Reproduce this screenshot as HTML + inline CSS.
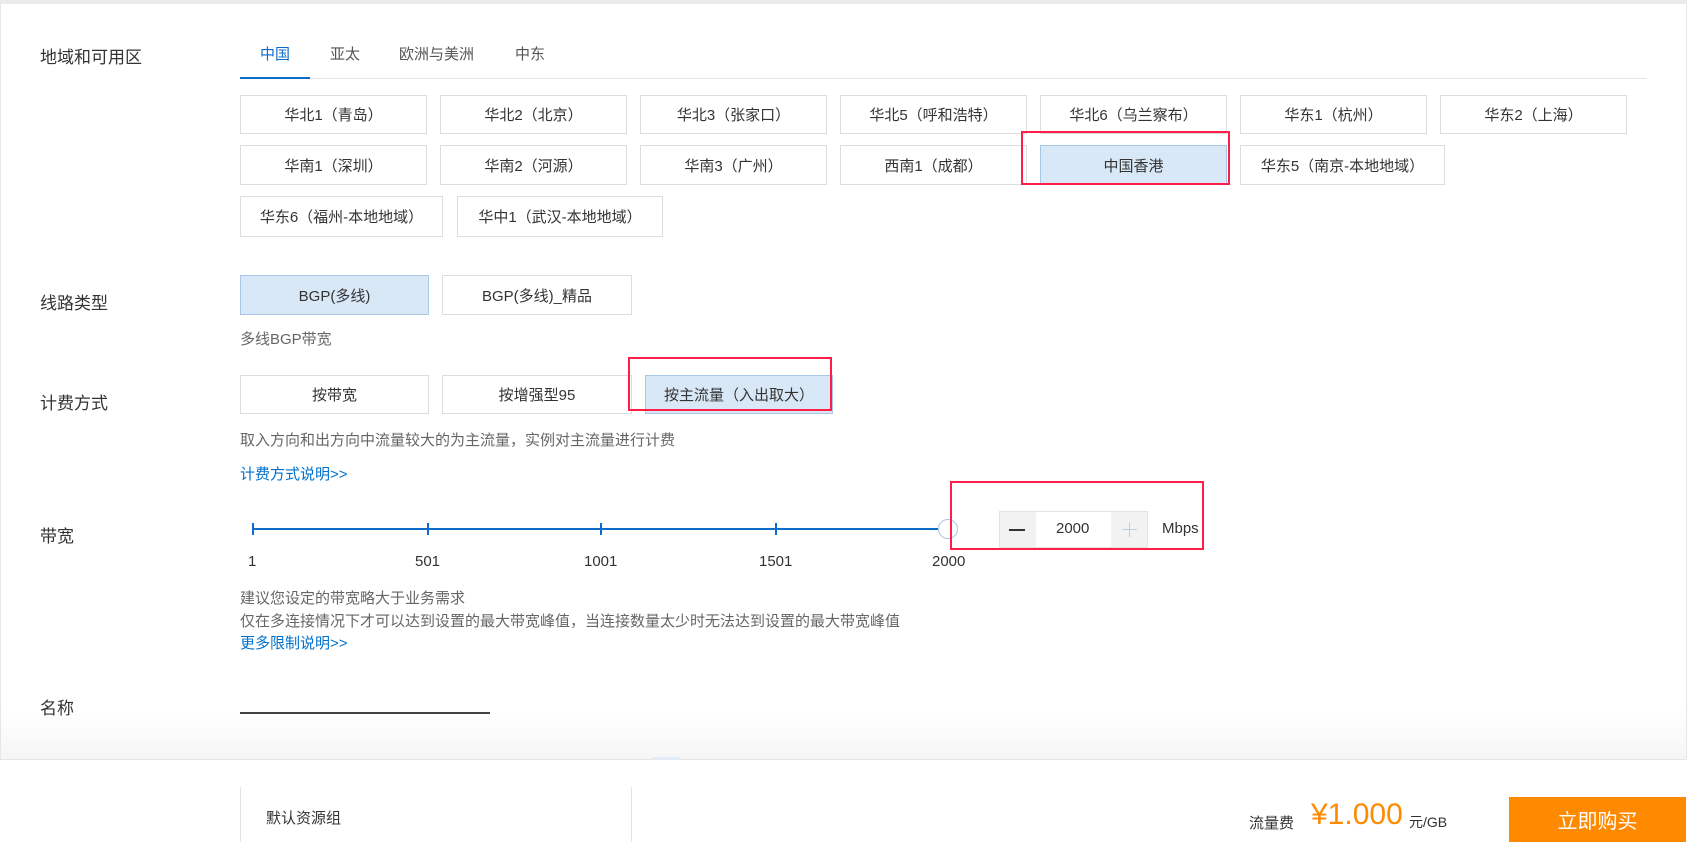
<!DOCTYPE html>
<html><head><meta charset="utf-8"><style>
*{margin:0;padding:0;box-sizing:border-box}
body{width:1690px;height:842px;position:relative;background:#fff;font-family:"Liberation Sans","Noto Sans CJK SC",sans-serif;color:#333;overflow:hidden}
.card{position:absolute;left:0;top:0;width:1687px;height:760px;border:1px solid #e6e6e6;border-top:4px solid #ebebeb;background:linear-gradient(#fff 705px,#f5f5f5 758px)}
.a{position:absolute;white-space:nowrap}
.lbl{font-size:17px;color:#333;left:40px}
.tab{font-size:15px;color:#555;top:43px}
.b{position:absolute;border:1px solid #ddd;background:#fff;font-size:15px;color:#333;display:flex;align-items:center;justify-content:center}
.sel{background:#d8e8f7;border-color:#a9c7e6}
.red{position:absolute;border:2px solid #ff1e4a}
.g{font-size:15px;color:#666}
.lk{font-size:15px;color:#0070cc}
.tick{position:absolute;width:2px;height:12px;background:#0f6bc8;top:523px}
.tl{font-size:15px;color:#333;top:553px}
</style></head><body>
<div class="card"></div>
<div class="a lbl" style="top:43px">地域和可用区</div>
<div class="a lbl" style="top:289px">线路类型</div>
<div class="a lbl" style="top:389px">计费方式</div>
<div class="a lbl" style="top:522px">带宽</div>
<div class="a lbl" style="top:694px">名称</div>

<div class="a tab" style="left:260px;color:#0f6bc8">中国</div>
<div class="a tab" style="left:330px">亚太</div>
<div class="a tab" style="left:399px">欧洲与美洲</div>
<div class="a tab" style="left:515px">中东</div>
<div class="a" style="left:240px;top:78px;width:1407px;height:1px;background:#e5e5e5"></div>
<div class="a" style="left:240px;top:77px;width:70px;height:2px;background:#0f6bc8"></div>

<div class="b" style="left:240px;top:95px;width:187px;height:39px">华北1（青岛）</div>
<div class="b" style="left:440px;top:95px;width:187px;height:39px">华北2（北京）</div>
<div class="b" style="left:640px;top:95px;width:187px;height:39px">华北3（张家口）</div>
<div class="b" style="left:840px;top:95px;width:187px;height:39px">华北5（呼和浩特）</div>
<div class="b" style="left:1040px;top:95px;width:187px;height:39px">华北6（乌兰察布）</div>
<div class="b" style="left:1240px;top:95px;width:187px;height:39px">华东1（杭州）</div>
<div class="b" style="left:1440px;top:95px;width:187px;height:39px">华东2（上海）</div>
<div class="b" style="left:240px;top:145px;width:187px;height:40px">华南1（深圳）</div>
<div class="b" style="left:440px;top:145px;width:187px;height:40px">华南2（河源）</div>
<div class="b" style="left:640px;top:145px;width:187px;height:40px">华南3（广州）</div>
<div class="b" style="left:840px;top:145px;width:187px;height:40px">西南1（成都）</div>
<div class="b sel" style="left:1040px;top:145px;width:187px;height:40px">中国香港</div>
<div class="b" style="left:1240px;top:145px;width:205px;height:40px">华东5（南京-本地地域）</div>
<div class="b" style="left:240px;top:196px;width:203px;height:41px">华东6（福州-本地地域）</div>
<div class="b" style="left:457px;top:196px;width:206px;height:41px">华中1（武汉-本地地域）</div>
<div class="red" style="left:1021px;top:131px;width:209px;height:54px"></div>

<div class="b sel" style="left:240px;top:275px;width:189px;height:40px">BGP(多线)</div>
<div class="b" style="left:442px;top:275px;width:190px;height:40px">BGP(多线)_精品</div>
<div class="a g" style="left:240px;top:328px">多线BGP带宽</div>

<div class="b" style="left:240px;top:375px;width:189px;height:39px">按带宽</div>
<div class="b" style="left:442px;top:375px;width:190px;height:39px">按增强型95</div>
<div class="b sel" style="left:645px;top:375px;width:188px;height:39px">按主流量（入出取大）</div>
<div class="red" style="left:628px;top:357px;width:204px;height:54px"></div>
<div class="a g" style="left:240px;top:429px">取入方向和出方向中流量较大的为主流量，实例对主流量进行计费</div>
<div class="a lk" style="left:240px;top:463px">计费方式说明&gt;&gt;</div>

<div class="a" style="left:252px;top:528px;width:686px;height:2px;background:#0f6bc8"></div>
<div class="tick" style="left:252px"></div><div class="tick" style="left:427px"></div><div class="tick" style="left:600px"></div><div class="tick" style="left:775px"></div>
<div class="a" style="left:938px;top:519px;width:20px;height:20px;border:1px solid #a9c7e6;border-radius:50%;background:#fff"></div>
<div class="a tl" style="left:248px">1</div>
<div class="a tl" style="left:415px">501</div>
<div class="a tl" style="left:584px">1001</div>
<div class="a tl" style="left:759px">1501</div>
<div class="a tl" style="left:932px">2000</div>
<div class="a" style="left:999px;top:511px;width:149px;height:37px;border:1px solid #e3e3e3;background:#fff"></div>
<div class="a" style="left:1000px;top:512px;width:36px;height:35px;background:#f2f2f2"></div>
<div class="a" style="left:1111px;top:512px;width:36px;height:35px;background:#f2f2f2"></div>
<div class="a" style="left:1009px;top:529px;width:16px;height:2px;background:#333"></div>
<div class="a" style="left:1122px;top:529px;width:15px;height:1px;background:#b8cfe6"></div>
<div class="a" style="left:1129px;top:522px;width:1px;height:15px;background:#b8cfe6"></div>
<div class="a" style="left:1056px;top:520px;font-size:15px">2000</div>
<div class="a" style="left:1162px;top:520px;font-size:15px">Mbps</div>
<div class="red" style="left:950px;top:481px;width:254px;height:69px"></div>

<div class="a g" style="left:240px;top:587px">建议您设定的带宽略大于业务需求</div>
<div class="a g" style="left:240px;top:610px">仅在多连接情况下才可以达到设置的最大带宽峰值，当连接数量太少时无法达到设置的最大带宽峰值</div>
<div class="a lk" style="left:240px;top:632px">更多限制说明&gt;&gt;</div>
<div class="a" style="left:240px;top:712px;width:250px;height:2px;background:#444"></div>
<div class="a" style="left:652px;top:757px;width:28px;height:3px;background:#e3ecf5"></div>

<div class="a" style="left:240px;top:787px;width:1px;height:55px;background:#e5e5e5"></div>
<div class="a" style="left:631px;top:787px;width:1px;height:55px;background:#e5e5e5"></div>
<div class="a" style="left:266px;top:807px;font-size:15px">默认资源组</div>
<div class="a" style="left:1249px;top:812px;font-size:15px">流量费</div>
<div class="a" style="left:1311px;top:798px;font-size:30px;color:#ff8a00">¥1.000</div>
<div class="a" style="left:1409px;top:812px;font-size:14px">元/GB</div>
<div class="a" style="left:1509px;top:797px;width:177px;height:45px;background:#ff8a00;color:#fff;font-size:20px;display:flex;align-items:center;justify-content:center">立即购买</div>
</body></html>
